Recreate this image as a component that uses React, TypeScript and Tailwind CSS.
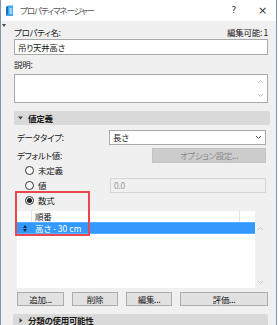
import React from "react";

function Chev({ up = false, color = "#b8b8b8" }: { up?: boolean; color?: string }) {
  return (
    <svg width="7" height="5" viewBox="0 0 7 5">
      <polyline
        points={up ? "1,4 3.5,1.5 6,4" : "1,1 3.5,3.5 6,1"}
        fill="none"
        stroke={color}
        strokeWidth="1"
      />
    </svg>
  );
}

function Radio({ checked = false }: { checked?: boolean }) {
  return (
    <span className="w-[9px] h-[9px] rounded-full border border-[#333] bg-white flex items-center justify-center shrink-0">
      {checked && <span className="w-[5px] h-[5px] rounded-full bg-[#222]" />}
    </span>
  );
}

export default function App() {
  return (
    <div className="w-[278px] h-[325px] overflow-hidden bg-white relative font-['Noto_Sans_CJK_JP',sans-serif] [font-feature-settings:'palt'] text-[8.5px] leading-none text-[#1a1a1a] tracking-[-0.3px]">
      <div className="w-[277px] h-[325px] bg-[#f0f0f0] border-x border-[#8395aa] flex flex-col">
        {/* title bar */}
        <div className="h-[21px] bg-white flex items-center shrink-0">
          <svg width="9" height="12" viewBox="0 0 9 12" className="ml-[4px]">
            <path d="M1 11 L1 2 L3 0.5 L3 9.5 Z" fill="#1f6fb3" />
            <path d="M3 0.5 L8 0.5 L8 11 L1 11 L3 9.5 Z" fill="#3fa9f0" />
            <path d="M4.5 3 L7 3 L7 9 L4.5 9 Z" fill="#9fd6fa" />
          </svg>
          <span className="ml-[6px] text-[#555] tracking-[-1px]">プロパティマネージャー</span>
          <span className="ml-auto text-[#333] text-[9px] font-['DejaVu_Sans',sans-serif]">?</span>
          <span className="ml-[22px] mr-[9px] text-[#333] text-[11px] font-['DejaVu_Sans',sans-serif]">×</span>
        </div>

        {/* body */}
        <div className="flex flex-col pl-[13px] pr-[8px]">
          <div className="mt-[5px] h-[12px] flex items-center justify-between">
            <span>プロパティ名:</span>
            <span>編集可能: 1</span>
          </div>
          <div className="mt-[1px] h-[16px] bg-white border border-[#a9a9a9] flex items-center pl-[3px]">
            <span>吊り天井高さ</span>
          </div>
          <div className="mt-[3px] h-[12px] flex items-center">
            <span>説明:</span>
          </div>
          <div className="mt-[4px] h-[29px] bg-white border border-[#a9a9a9] flex justify-end">
            <div className="w-[11px] flex flex-col items-center justify-between py-[4px] mr-[1px]">
              <Chev up color="#c4c4c4" />
              <Chev color="#c4c4c4" />
            </div>
          </div>

          {/* section bar */}
          <div className="mt-[8px] h-[14px] -mr-[2px] bg-[#d9d9d9] rounded-[2px] flex items-center pl-[4px]">
            <svg width="5" height="4" viewBox="0 0 5 4">
              <polygon points="0,0.5 5,0.5 2.5,3.5" fill="#444" />
            </svg>
            <span className="ml-[5px] font-bold">値定義</span>
          </div>

          {/* data type */}
          <div className="mt-[5px] h-[15px] flex items-center pl-[3px]">
            <span className="w-[92px]">データタイプ:</span>
            <div className="w-[157px] h-[15px] bg-white border border-[#a9a9a9] flex items-center pl-[3px] pr-[3px] justify-between">
              <span>長さ</span>
              <Chev color="#444" />
            </div>
          </div>

          {/* default */}
          <div className="mt-[3px] h-[15px] flex items-center pl-[3px]">
            <span className="w-[135px]">デフォルト値:</span>
            <div className="w-[114px] h-[15px] bg-[#cccccc] border border-[#c4c4c4] flex items-center justify-center text-[#8a8a8a]">
              オプション設定...
            </div>
          </div>

          <div className="h-[15px] flex items-center pl-[11px] gap-[4px]">
            <Radio />
            <span>未定義</span>
          </div>
          <div className="h-[15px] flex items-center">
            <div className="w-[96px] flex items-center pl-[11px] gap-[4px]">
              <Radio />
              <span>値</span>
            </div>
            <div className="w-[156px] h-[15px] bg-[#f0f0f0] border border-[#d4d4d4] flex items-center pl-[3px] text-[#9a9a9a]">
              0.0
            </div>
          </div>
          <div className="h-[15px] flex items-center pl-[11px] gap-[4px]">
            <Radio checked />
            <span>数式</span>
          </div>

          {/* list */}
          <div className="mt-[3px] ml-[3px] w-[249px] h-[77px] flex">
            <div className="w-[238px] h-full bg-white flex flex-col">
              <div className="h-[11px] flex">
                <div className="w-[15px] border-r border-[#e3e3e3]" />
                <div className="w-[208px] border-r border-[#e3e3e3] flex items-center pl-[3px]">
                  <span>順番</span>
                </div>
              </div>
              <div className="h-[12px] bg-[#3399ff] border-y border-[#5aaeff] flex items-center text-white">
                <span className="w-[15px] flex justify-center">
                  <svg width="4" height="7" viewBox="0 0 4 7">
                    <polygon points="0,3 4,3 2,0" fill="#1a2a40" />
                    <polygon points="0,4 4,4 2,7" fill="#1a2a40" />
                  </svg>
                </span>
                <span className="pl-[3px] tracking-[0px]">高さ - 30 cm</span>
              </div>
            </div>
            <div className="w-[11px] h-full flex flex-col items-center justify-between pt-[15px] pb-[3px]">
              <Chev up color="#c4c4c4" />
              <Chev color="#c4c4c4" />
            </div>
          </div>

          {/* buttons */}
          <div className="mt-[4px] ml-[3px] h-[14px] flex gap-[8px]">
            <div className="w-[47px] bg-[#e1e1e1] border border-[#adadad] flex items-center justify-center">追加...</div>
            <div className="w-[46px] bg-[#e1e1e1] border border-[#adadad] flex items-center justify-center">削除</div>
            <div className="w-[46px] bg-[#e1e1e1] border border-[#adadad] flex items-center justify-center">編集...</div>
            <div className="w-[88px] bg-[#e1e1e1] border border-[#adadad] flex items-center justify-center">評価...</div>
          </div>

          {/* bottom section */}
          <div className="mt-[8px] h-[12px] -ml-[1px] bg-[#d9d9d9] rounded-t-[2px] flex items-center pl-[6px]">
            <svg width="4" height="5" viewBox="0 0 4 5">
              <polygon points="0.5,0 3.5,2.5 0.5,5" fill="#444" />
            </svg>
            <span className="ml-[5px] font-bold">分類の使用可能性</span>
          </div>
        </div>
      </div>

      {/* small collapse triangle on left edge */}
      <svg width="4" height="3" viewBox="0 0 4 3" className="absolute left-[2px] top-[24px]">
        <polygon points="0,0 4,0 2,3" fill="#444" />
      </svg>

      {/* red annotation box */}
      <div className="absolute left-[15px] top-[191px] w-[75px] h-[45px] border-2 border-[#e8474f]" />
    </div>
  );
}
